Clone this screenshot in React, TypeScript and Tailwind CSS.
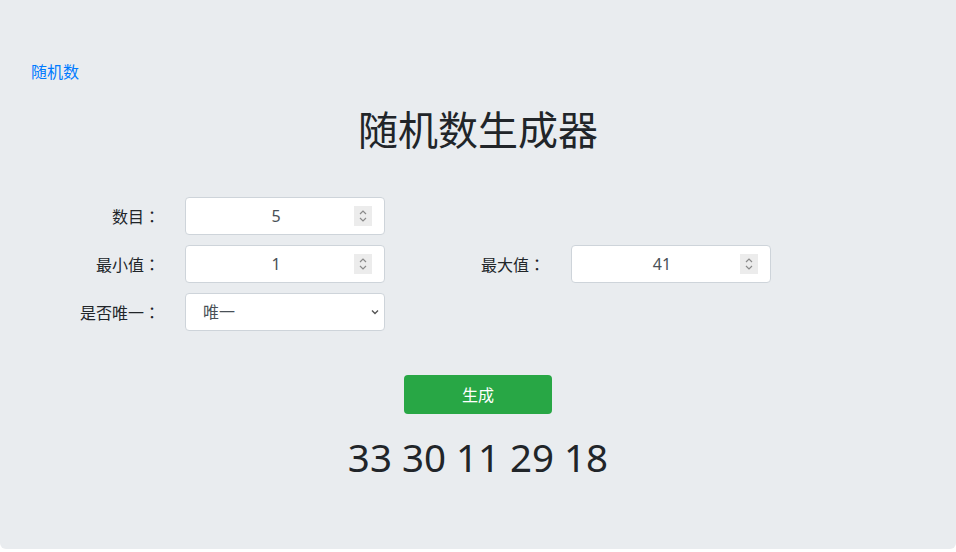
import { useState } from "react";

const font = "font-['Noto_Sans','Noto_Sans_CJK_SC',sans-serif]";

const Spinner = () => (
  <div className="absolute right-[12px] top-1/2 -translate-y-1/2 w-[18px] h-[20px] bg-[#ececec] flex items-center justify-center">
    <svg width="10" height="14" viewBox="0 0 10 14" fill="none" stroke="#8a8a8a" strokeWidth="1.2">
      <path d="M2 5l3-3 3 3" />
      <path d="M2 9l3 3 3-3" />
    </svg>
  </div>
);

const NumberField = ({ value }: { value: string }) => (
  <div className="relative w-[200px] h-[38px] bg-white border border-[#ced4da] rounded-[4px] flex items-center justify-center">
    <span className="text-[16px] text-[#495057] pr-[18px]">{value}</span>
    <Spinner />
  </div>
);

const Colon = () => (
  <span className="font-['Noto_Sans_CJK_JP',sans-serif]">：</span>
);

const Label = ({ text, className = "w-[160px] text-right" }: { text: string; className?: string }) => (
  <label className={`${className} shrink-0 whitespace-nowrap text-[16px] leading-6 text-[#212529]`}>
    {text}
    <Colon />
  </label>
);

const App = () => {
  const [numbers] = useState([33, 30, 11, 29, 18]);

  return (
    <div className={`${font} bg-white min-h-[552px]`}>
      <div className="bg-[#e9ecef] h-[549px] rounded-b-[6px] pt-[60px] px-[31px]">
        <a href="#" className="block text-[16px] leading-6 text-[#007bff] w-fit">
          随机数
        </a>
        <h1 className="mt-[22px] text-center text-[40px] leading-[48px] text-[#212529] -ml-[31px] mr-[-31px]">
          随机数生成器
        </h1>

        <div className="mt-[43px] -ml-[31px] flex flex-col gap-[10px]">
          <div className="flex items-center">
            <Label text="数目" />
            <div className="ml-[25px]">
              <NumberField value="5" />
            </div>
          </div>
          <div className="flex items-center">
            <Label text="最小值" />
            <div className="ml-[25px]">
              <NumberField value="1" />
            </div>
            <Label text="最大值" className="ml-[96px] w-[64px]" />
            <div className="ml-[26px]">
              <NumberField value="41" />
            </div>
          </div>
          <div className="flex items-center">
            <Label text="是否唯一" />
            <div className="ml-[25px] relative w-[200px] h-[38px] bg-white border border-[#ced4da] rounded-[4px] flex items-center pl-[17px]">
              <span className="text-[16px] text-[#495057]">唯一</span>
              <svg
                className="absolute right-[4px] top-1/2 -translate-y-1/2"
                width="10"
                height="10"
                viewBox="0 0 10 10"
                fill="none"
                stroke="#555"
                strokeWidth="1.4"
              >
                <path d="M2 3.5l3 3 3-3" />
              </svg>
            </div>
          </div>
        </div>

        <div className="mt-[44px] flex justify-center -ml-[31px] mr-[-31px]">
          <button className="w-[148px] h-[39px] bg-[#28a745] text-white text-[16px] rounded-[4px]">
            生成
          </button>
        </div>

        <div className="mt-[19px] text-center text-[38.5px] leading-[48px] text-[#212529] -ml-[31px] mr-[-31px]">
          {numbers.join(" ")}
        </div>
      </div>
    </div>
  );
};

export default App;
